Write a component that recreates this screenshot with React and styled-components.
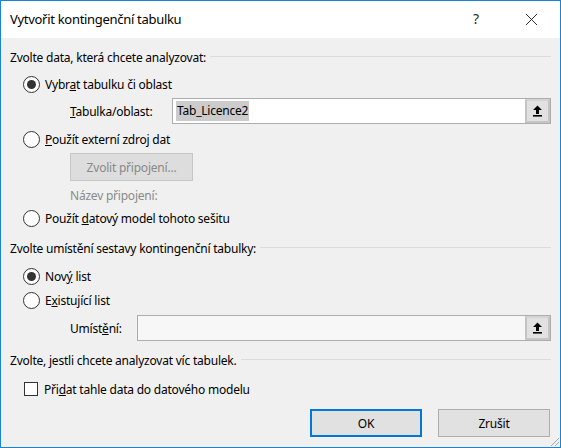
import React from "react";
import styled, { createGlobalStyle } from "styled-components";

const GlobalStyle = createGlobalStyle`
  html, body {
    margin: 0;
    padding: 0;
    background: #ffffff;
  }
  * {
    box-sizing: border-box;
  }
`;

export default function App() {
  return (
    <>
      <GlobalStyle />
      <Window>
        <TitleBar>
          <Title>Vytvořit kontingenční tabulku</Title>
          <TitleButtons>
            <HelpGlyph>?</HelpGlyph>
            <CloseIcon viewBox="0 0 14 14">
              <path d="M1 1 L13 13 M13 1 L1 13" stroke="#1e1e1e" strokeWidth="1" />
            </CloseIcon>
          </TitleButtons>
        </TitleBar>

        <Body>
          <SectionHeader top={9}>
            <span>Zvolte data, která chcete analyzovat:</span>
            <Rule />
          </SectionHeader>

          <OptionRow top={7}>
            <Radio checked />
            <span>Vybr<u>a</u>t tabulku či oblast</span>
          </OptionRow>

          <FieldRow top={4}>
            <FieldLabel width={102}><u>T</u>abulka/oblast:</FieldLabel>
            <RefInput>
              <InputText>
                <Selection>Tab_Licence2</Selection>
              </InputText>
              <CollapseButton />
            </RefInput>
          </FieldRow>

          <OptionRow top={5}>
            <Radio />
            <span><u>P</u>oužít externí zdroj dat</span>
          </OptionRow>

          <Indented top={4}>
            <DisabledButton>Zvolit připojení...</DisabledButton>
          </Indented>

          <Indented top={4}>
            <MutedText>Název připojení:</MutedText>
          </Indented>

          <OptionRow top={3}>
            <Radio />
            <span>Použít <u>d</u>atový model tohoto sešitu</span>
          </OptionRow>

          <SectionHeader top={10}>
            <span>Zvolte umístění sestavy kontingenční tabulky:</span>
            <Rule />
          </SectionHeader>

          <OptionRow top={8}>
            <Radio checked />
            <span>Nov<u>ý</u> list</span>
          </OptionRow>

          <OptionRow top={4}>
            <Radio />
            <span>E<u>x</u>istující list</span>
          </OptionRow>

          <FieldRow top={5}>
            <FieldLabel width={67}>Umíst<u>ě</u>ní:</FieldLabel>
            <RefInput disabled>
              <InputText />
              <CollapseButton />
            </RefInput>
          </FieldRow>

          <SectionHeader top={9}>
            <span>Zvolte, jestli chcete analyzovat víc tabulek.</span>
            <Rule />
          </SectionHeader>

          <OptionRow top={9}>
            <Checkbox />
            <span>Při<u>d</u>at tahle data do datového modelu</span>
          </OptionRow>

          <Footer>
            <DialogButton primary>OK</DialogButton>
            <DialogButton>Zrušit</DialogButton>
          </Footer>
        </Body>

        <Grip viewBox="0 0 12 12">
          <path d="M11 3 L3 11 M11 7 L7 11" stroke="#a8a8a8" strokeWidth="1" />
        </Grip>
      </Window>
    </>
  );
}

function Radio({ checked }) {
  return (
    <RadioCircle>
      {checked && <RadioDot />}
    </RadioCircle>
  );
}

function CollapseButton() {
  return (
    <SideButton>
      <svg width="11" height="12" viewBox="0 0 11 12">
        <path d="M5.5 0.5 L10 5 L7 5 L7 9 L4 9 L4 5 L1 5 Z" fill="#000" />
        <rect x="1" y="10" width="9" height="1.6" fill="#000" />
      </svg>
    </SideButton>
  );
}

const Window = styled.div`
  position: relative;
  width: 561px;
  height: 448px;
  border: 1px solid #1883d7;
  background: #f0f0f0;
  display: flex;
  flex-direction: column;
  font-family: "Noto Sans", "Open Sans", sans-serif;
  font-size: 12px;
  letter-spacing: -0.22px;
  color: #000;
  overflow: hidden;
`;

const TitleBar = styled.div`
  height: 37px;
  background: #ffffff;
  display: flex;
  align-items: center;
  justify-content: space-between;
  padding: 0 0 0 9px;
  flex-shrink: 0;
`;

const Title = styled.div`
  font-size: 13px;
  letter-spacing: -0.3px;
  color: #000;
  padding-bottom: 1px;
`;

const TitleButtons = styled.div`
  display: flex;
  align-items: center;
  height: 100%;
`;

const HelpGlyph = styled.div`
  width: 20px;
  text-align: center;
  font-size: 14px;
  color: #2a2a2a;
  padding-bottom: 2px;
`;

const CloseIcon = styled.svg`
  width: 13px;
  height: 13px;
  margin: 0 22px 0 39px;
`;

const Body = styled.div`
  flex: 1;
  display: flex;
  flex-direction: column;
  padding: 0 9px 0 9px;
`;

const SectionHeader = styled.div`
  display: flex;
  align-items: center;
  height: 20px;
  margin-top: ${(p) => p.top}px;
  white-space: nowrap;
`;

const Rule = styled.div`
  flex: 1;
  height: 1px;
  background: #dcdcdc;
  margin: 0 0 0 4px;
  position: relative;
  top: -1px;
`;

const OptionRow = styled.div`
  display: flex;
  align-items: center;
  gap: 5px;
  height: 20px;
  margin-top: ${(p) => p.top}px;
  padding-left: 13px;
  white-space: nowrap;
`;

const RadioCircle = styled.div`
  width: 17px;
  height: 17px;
  border-radius: 50%;
  border: 1px solid #333333;
  background: #ffffff;
  display: flex;
  align-items: center;
  justify-content: center;
  flex-shrink: 0;
`;

const RadioDot = styled.div`
  width: 9px;
  height: 9px;
  border-radius: 50%;
  background: #333333;
`;

const Checkbox = styled.div`
  width: 14px;
  height: 14px;
  border: 1px solid #333333;
  background: #ffffff;
  margin-left: 1px;
  margin-right: 1px;
  flex-shrink: 0;
`;

const FieldRow = styled.div`
  display: flex;
  align-items: center;
  margin-top: ${(p) => p.top}px;
  padding-left: 60px;
`;

const FieldLabel = styled.div`
  width: ${(p) => p.width}px;
  flex-shrink: 0;
  white-space: nowrap;
`;

const RefInput = styled.div`
  flex: 1;
  height: 26px;
  display: flex;
  border: 1px solid #adadad;
  background: ${(p) => (p.disabled ? "#f7f7f7" : "#ffffff")};
`;

const InputText = styled.div`
  flex: 1;
  display: flex;
  align-items: center;
  padding-left: 3px;
`;

const Selection = styled.span`
  background: #cccccc;
  color: #000;
  padding: 1px 1px 2px 1px;
`;

const SideButton = styled.div`
  width: 25px;
  height: 24px;
  background: #e1e1e1;
  border: 2px solid #c4c4c4;
  border-top-color: #d4d4d4;
  display: flex;
  align-items: center;
  justify-content: center;
`;

const Indented = styled.div`
  display: flex;
  margin-top: ${(p) => p.top}px;
  padding-left: 60px;
`;

const DisabledButton = styled.div`
  width: 123px;
  height: 28px;
  background: #dddddd;
  border: 1px solid #c6c6c6;
  color: #8a8a8a;
  display: flex;
  align-items: center;
  justify-content: center;
`;

const MutedText = styled.div`
  height: 20px;
  display: flex;
  align-items: center;
  color: #8a8a8a;
`;

const Footer = styled.div`
  display: flex;
  justify-content: flex-end;
  gap: 16px;
  margin-top: 10px;
  padding-right: 1px;
`;

const DialogButton = styled.div`
  width: 112px;
  height: 28px;
  background: #e1e1e1;
  border: ${(p) => (p.primary ? "2px solid #0078d7" : "1px solid #adadad")};
  display: flex;
  align-items: center;
  justify-content: center;
  color: #000;
`;

const Grip = styled.svg`
  position: absolute;
  right: 0;
  bottom: 0;
  width: 12px;
  height: 12px;
`;
